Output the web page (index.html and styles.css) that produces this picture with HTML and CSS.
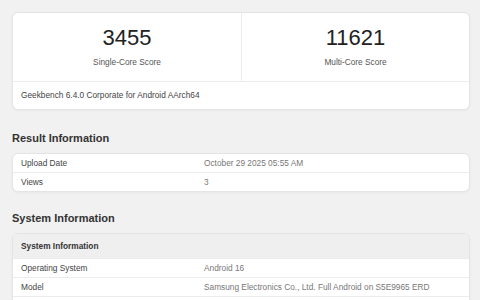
FILE: index.html
```html
<!DOCTYPE html>
<html lang="en">
<head>
  <meta charset="UTF-8">
  <title>Geekbench Result</title>
  <link rel="stylesheet" href="styles.css">
</head>
<body>
  <div class="page">
    <div class="card score-card">
      <div class="scores">
        <div class="score">
          <div class="score-value">3455</div>
          <div class="score-label">Single-Core Score</div>
        </div>
        <div class="score">
          <div class="score-value">11621</div>
          <div class="score-label">Multi-Core Score</div>
        </div>
      </div>
      <div class="version">Geekbench 6.4.0 Corporate for Android AArch64</div>
    </div>

    <h3 class="section-title">Result Information</h3>
    <div class="card info-table">
      <div class="row">
        <div class="name">Upload Date</div>
        <div class="value">October 29 2025 05:55 AM</div>
      </div>
      <div class="row">
        <div class="name">Views</div>
        <div class="value">3</div>
      </div>
    </div>

    <h3 class="section-title system">System Information</h3>
    <div class="card info-table">
      <div class="row head">
        <div class="name">System Information</div>
      </div>
      <div class="row">
        <div class="name">Operating System</div>
        <div class="value">Android 16</div>
      </div>
      <div class="row">
        <div class="name">Model</div>
        <div class="value">Samsung Electronics Co., Ltd. Full Android on S5E9965 ERD</div>
      </div>
      <div class="row empty"></div>
    </div>
  </div>
</body>
</html>
```

FILE: styles.css
```css
* {
  box-sizing: border-box;
}

body {
  margin: 0;
  background-color: #f1f1f1;
  font-family: "Liberation Sans", Arial, Helvetica, sans-serif;
  color: #333;
}

.page {
  padding: 12px 10px 0 12px;
}

.card {
  background-color: #fff;
  border: 1px solid #e4e4e4;
  border-radius: 6px;
  box-shadow: 0 1px 3px rgba(0, 0, 0, 0.04);
  overflow: hidden;
}

.scores {
  display: grid;
  grid-template-columns: 1fr 1fr;
  border-bottom: 1px solid #ececec;
}

.score {
  text-align: center;
  padding: 12px 0 13px;
}

.score + .score {
  border-left: 1px solid #ececec;
}

.score-value {
  font-size: 22px;
  line-height: 26px;
  color: #222;
}

.score-label {
  font-size: 8.3px;
  line-height: 12px;
  margin-top: 5px;
  color: #555;
}

.version {
  font-size: 8.3px;
  line-height: 27px;
  padding: 0 8px;
  color: #444;
}

.section-title {
  font-size: 11px;
  line-height: 14px;
  font-weight: bold;
  margin: 21px 0 8px;
  color: #333;
}

.section-title.system {
  margin-top: 19px;
}

.row {
  display: grid;
  grid-template-columns: 183px 1fr;
  padding: 0 8px;
  font-size: 8.3px;
  line-height: 18px;
}

.row + .row {
  border-top: 1px solid #ececec;
}

.row.empty {
  height: 18px;
}

.row .name {
  color: #444;
}

.row .value {
  color: #777;
}

.row.head {
  background-color: #efefef;
  line-height: 24px;
}

.row.head .name {
  font-weight: bold;
  color: #333;
}
```
